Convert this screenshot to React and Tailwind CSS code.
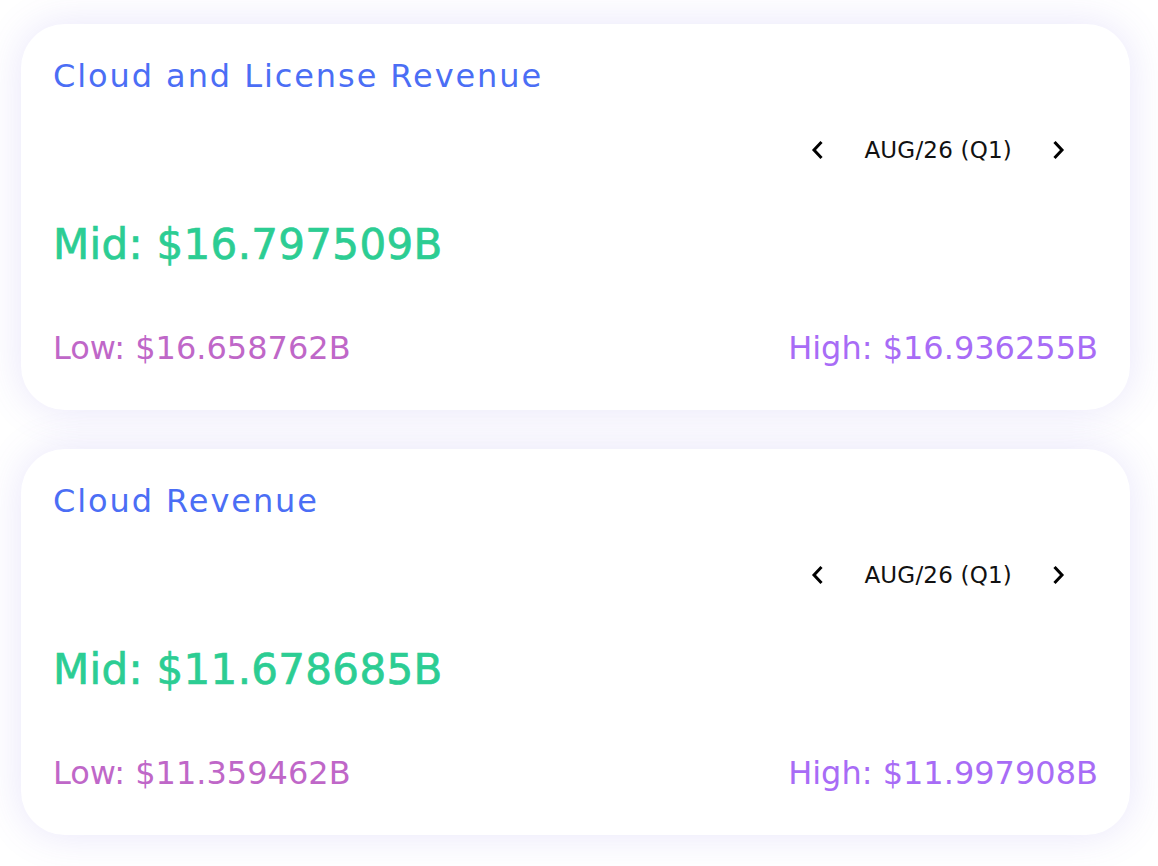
const cards = [
  { title: "Cloud and License Revenue", period: "AUG/26 (Q1)", mid: "$16.797509B", low: "$16.658762B", high: "$16.936255B" },
  { title: "Cloud Revenue", period: "AUG/26 (Q1)", mid: "$11.678685B", low: "$11.359462B", high: "$11.997908B" },
];

function Chevron({ dir }) {
  return (
    <svg width="12" height="22" viewBox="0 0 12 22" fill="none" stroke="currentColor" strokeWidth="3" strokeLinecap="square">
      {dir === "left" ? <polyline points="9.5,4 3,11 9.5,18" /> : <polyline points="2.5,4 9,11 2.5,18" />}
    </svg>
  );
}

function GuidanceCard({ title, period, mid, low, high }) {
  return (
    <div className="bg-white rounded-[44px] shadow-[0_0_40px_rgba(110,95,225,0.16)] pt-[32px] pb-[42px] pl-[32px] pr-[32px] h-[386px]">
      <h2 className="text-[32px] leading-[40px] tracking-[0.06em] text-[#4b6ef5]">{title}</h2>
      <div className="mt-[34px] flex justify-end pr-[29px]">
        <div className="flex items-center h-[40px]">
          <button className="w-[20px] h-[40px] flex items-center justify-center text-black">
            <Chevron dir="left" />
          </button>
          <span className="mx-[37px] text-[23px] leading-[40px] tracking-[0.2px] text-[#111]">{period}</span>
          <button className="w-[20px] h-[40px] flex items-center justify-center text-black">
            <Chevron dir="right" />
          </button>
        </div>
      </div>
      <div className="mt-[50px] text-[42px] leading-[50px] tracking-[0.3px] text-[#2ccd93] [-webkit-text-stroke:0.7px_#2ccd93]">
        Mid: {mid}
      </div>
      <div className="mt-[58px] flex justify-between text-[32px] leading-[40px]">
        <span className="text-[#bf67c8]">Low: {low}</span>
        <span className="text-[#a86cf6]">High: {high}</span>
      </div>
    </div>
  );
}

export default function App() {
  return (
    <div className="min-h-[866px] bg-white pt-[24px] pl-[21px] pr-[28px] font-['DejaVu_Sans',sans-serif]">
      <div className="flex flex-col gap-[39px]">
        {cards.map((c) => (
          <GuidanceCard key={c.title} {...c} />
        ))}
      </div>
    </div>
  );
}
